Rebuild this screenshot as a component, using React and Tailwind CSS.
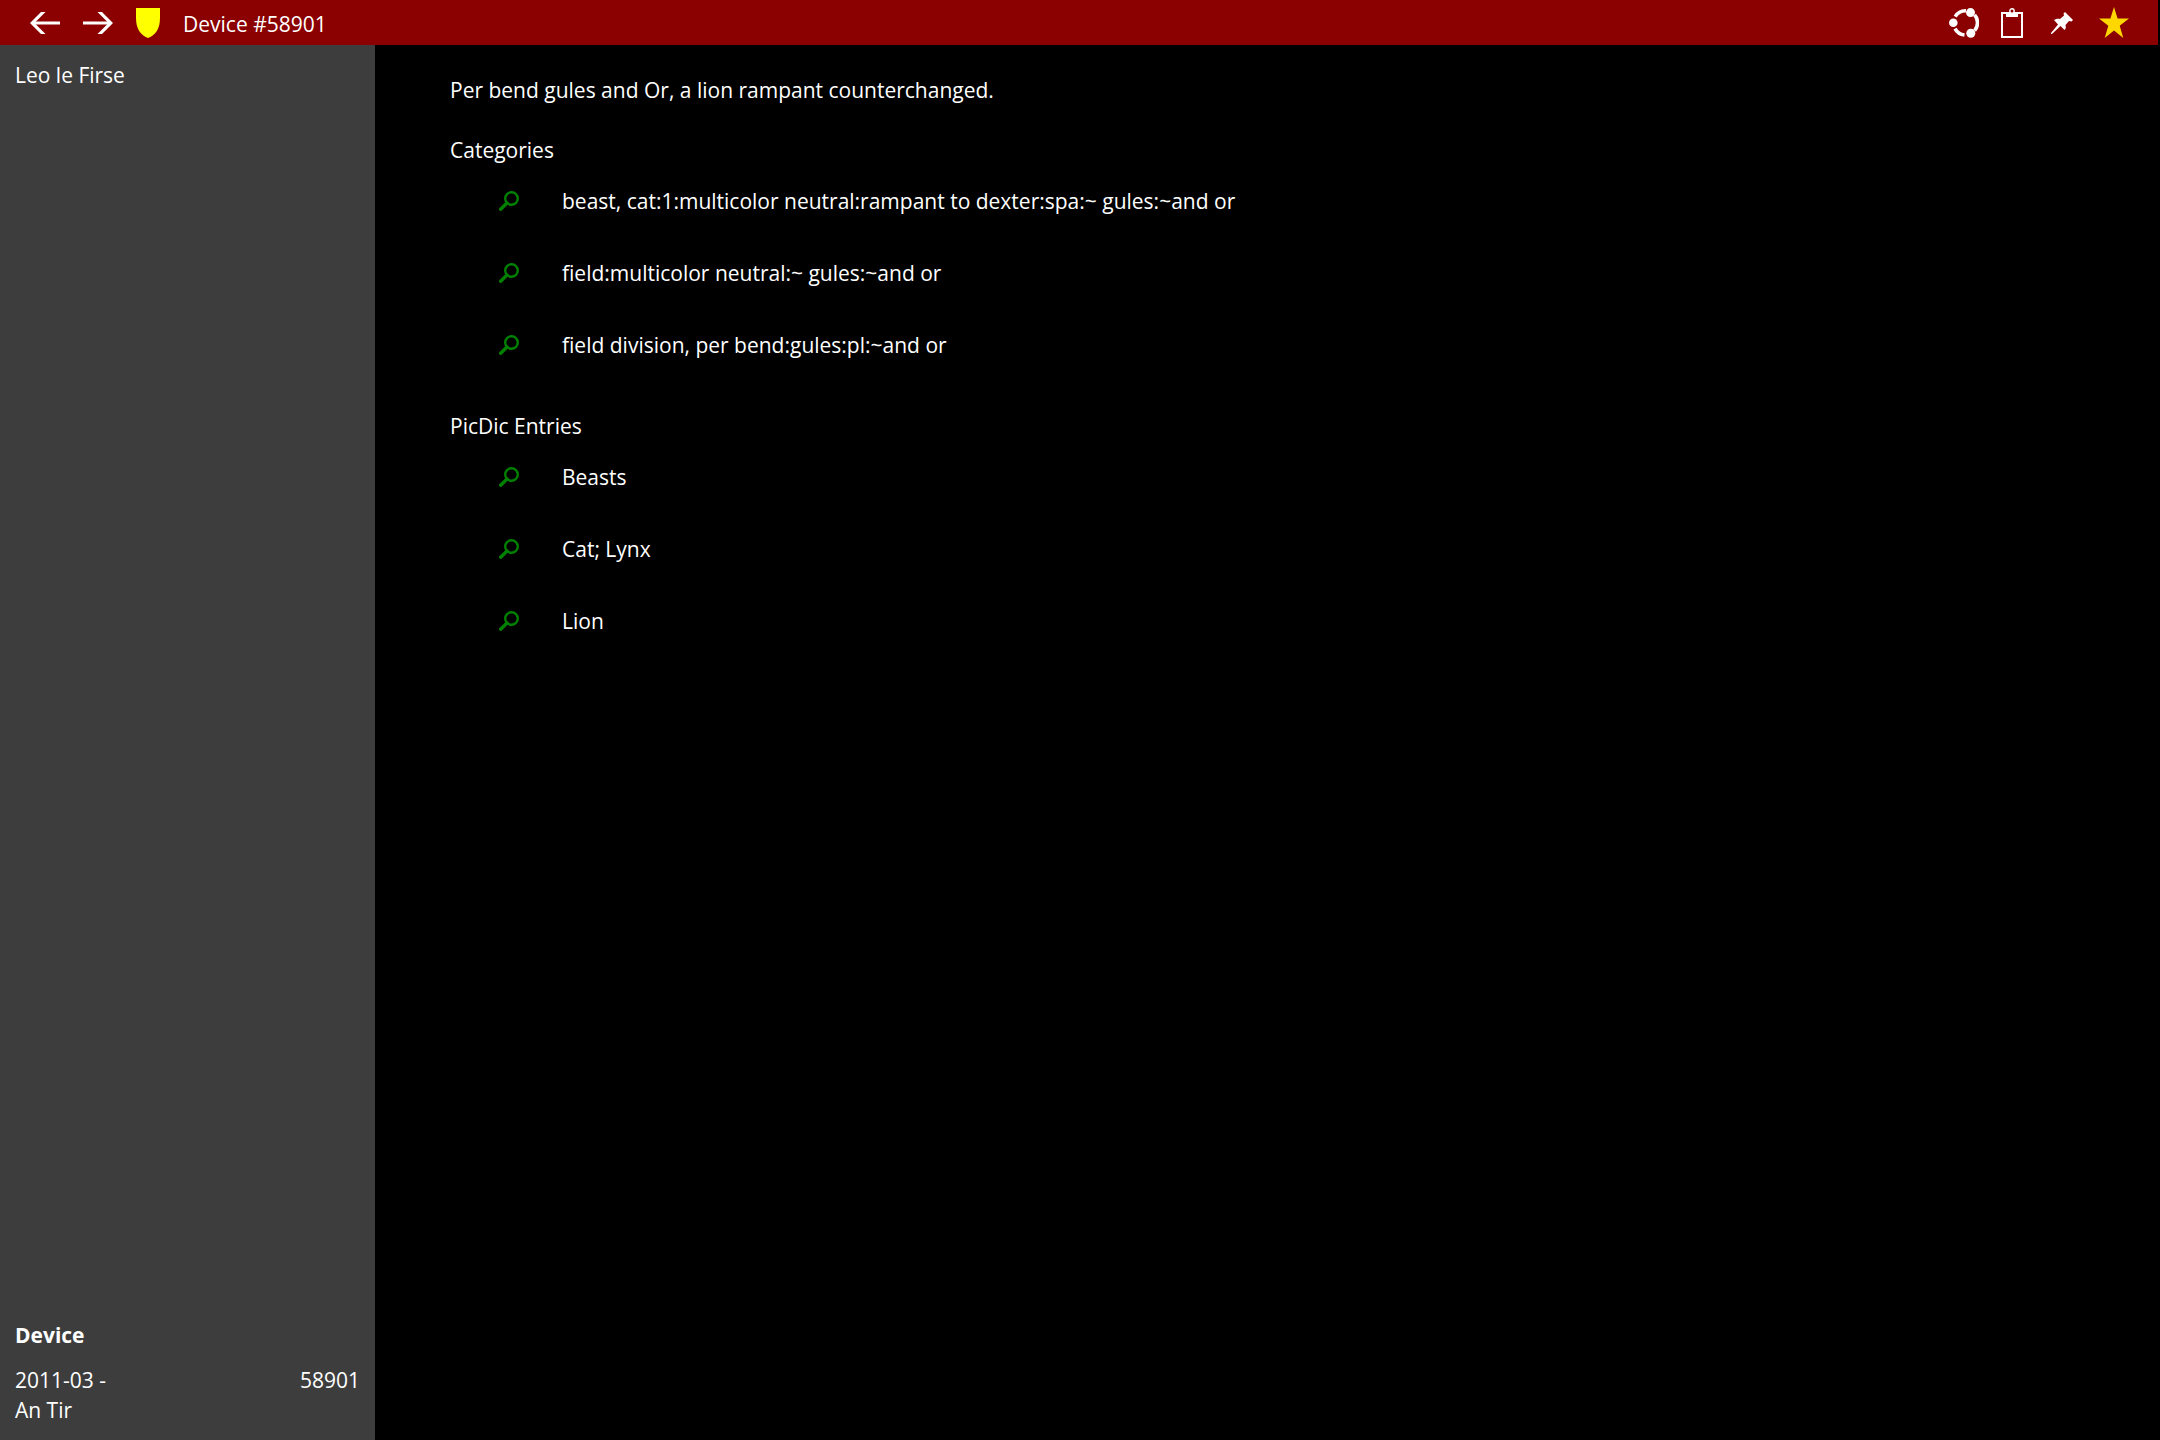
const categories = [
  "beast, cat:1:multicolor neutral:rampant to dexter:spa:~ gules:~and or",
  "field:multicolor neutral:~ gules:~and or",
  "field division, per bend:gules:pl:~and or",
];

const picDicEntries = ["Beasts", "Cat; Lynx", "Lion"];

function BackIcon() {
  return (
    <svg width="30" height="22" viewBox="0 0 30 22" fill="none">
      <path d="M2.5 11H30" stroke="currentColor" strokeWidth="3" />
      <path d="M11 0H15.5L4.5 11L15.5 22H11L0 11Z" fill="currentColor" />
    </svg>
  );
}

function ForwardIcon() {
  return (
    <svg width="30" height="22" viewBox="0 0 30 22" fill="none">
      <path d="M0 11H27.5" stroke="currentColor" strokeWidth="3" />
      <path d="M19 0H14.5L25.5 11L14.5 22H19L30 11Z" fill="currentColor" />
    </svg>
  );
}

function ShieldIcon() {
  return (
    <svg width="24" height="30" viewBox="0 0 24 30">
      <path d="M0 0H24V10C24 20 20 27 12 30C4 27 0 20 0 10Z" fill="#ffff00" />
    </svg>
  );
}

function ShareIcon() {
  return (
    <svg width="30" height="30" viewBox="0 0 30 30" fill="none">
      <g stroke="currentColor" strokeWidth="3.6">
        <path d="M6.2 8.6A12.2 12.2 0 0 1 17 2.8" />
        <path d="M25.6 6.8A12.2 12.2 0 0 1 25.6 22.6" />
        <path d="M15.5 27A12.2 12.2 0 0 1 6 20.6" />
      </g>
      <g fill="currentColor">
        <circle cx="4.3" cy="14.8" r="4.3" />
        <circle cx="21.5" cy="4.6" r="4.5" />
        <circle cx="21.8" cy="25.2" r="4.5" />
      </g>
    </svg>
  );
}

function ClipboardIcon() {
  return (
    <svg width="22" height="30" viewBox="0 0 22 30" fill="none">
      <path d="M1 5H21V29H1Z" stroke="currentColor" strokeWidth="2" />
      <path d="M5 9V4H17V9Z" fill="currentColor" />
      <circle cx="11" cy="3" r="2.2" fill="#8b0000" stroke="currentColor" strokeWidth="1.4" />
      <path d="M5 5H17V9H5Z" fill="currentColor" />
    </svg>
  );
}

function PinIcon() {
  return (
    <svg width="22" height="22" viewBox="0 0 22 22">
      <path
        d="M14 0L22 8L20.5 9.5L18 9L14.5 13C15 15 15 17 13.5 18L9.5 14L1 22H0V21L7 12.5L3 8C5.5 6.5 7.5 6.5 9 7L13 3.5L12.5 1.5Z"
        fill="currentColor"
      />
    </svg>
  );
}

function StarIcon() {
  return (
    <svg width="30" height="32" viewBox="0 0 30 32">
      <path
        d="M15 0L18.6 11.6H30L20.7 18.8L24.3 31L15 23.6L5.7 31L9.3 18.8L0 11.6H11.4Z"
        fill="#ffd700"
      />
    </svg>
  );
}

function SearchIcon() {
  return (
    <svg width="22" height="20" viewBox="0 0 22 20" fill="none">
      <circle cx="12.5" cy="7.5" r="6.3" stroke="currentColor" strokeWidth="2.4" />
      <path d="M8 12L1.7 18.3" stroke="currentColor" strokeWidth="3.4" strokeLinecap="round" />
    </svg>
  );
}

function IconButton({ label, className, children }) {
  return (
    <button aria-label={label} className={`flex h-full items-center justify-center ${className}`}>
      {children}
    </button>
  );
}

function EntryList({ title, entries }) {
  return (
    <section>
      <h2>{title}</h2>
      <ul className="pl-6">
        {entries.map((entry) => (
          <li key={entry} className="flex items-center gap-4">
            <button
              aria-label={`Search ${entry}`}
              className="flex size-[72px] shrink-0 items-center justify-center text-[#008000]"
            >
              <SearchIcon />
            </button>
            <span>{entry}</span>
          </li>
        ))}
      </ul>
    </section>
  );
}

function App() {
  return (
    <div className="flex min-h-screen flex-col bg-black font-['Open_Sans','Noto_Sans',sans-serif] text-[21px] leading-[30px] text-white">
      <header className="mr-0.5 flex h-[45px] items-end bg-[#8b0000] pl-5 pr-[18px]">
        <IconButton label="Back" className="w-[50px]">
          <BackIcon />
        </IconButton>
        <IconButton label="Forward" className="w-[56px]">
          <ForwardIcon />
        </IconButton>
        <div className="flex h-full w-11 items-center justify-center">
          <ShieldIcon />
        </div>
        <h1 className="grow py-1.5 pl-[13px]">Device #58901</h1>
        <IconButton label="Share" className="w-12">
          <ShareIcon />
        </IconButton>
        <IconButton label="Copy" className="w-12">
          <ClipboardIcon />
        </IconButton>
        <IconButton label="Pin" className="w-[52px]">
          <PinIcon />
        </IconButton>
        <IconButton label="Favorite" className="w-[52px]">
          <StarIcon />
        </IconButton>
      </header>

      <div className="flex grow">
        <aside className="flex w-[375px] shrink-0 flex-col justify-between bg-[#3d3d3d] p-[15px]">
          <p>Leo le Firse</p>
          <div>
            <h2 className="pb-[15px] font-bold">Device</h2>
            <div className="flex justify-between">
              <span>2011-03 -</span>
              <span>58901</span>
            </div>
            <p>An Tir</p>
          </div>
        </aside>

        <main className="flex grow flex-col gap-[30px] px-[75px] py-[30px]">
          <p>Per bend gules and Or, a lion rampant counterchanged.</p>
          <EntryList title="Categories" entries={categories} />
          <EntryList title="PicDic Entries" entries={picDicEntries} />
        </main>
      </div>
    </div>
  );
}

export default App;
